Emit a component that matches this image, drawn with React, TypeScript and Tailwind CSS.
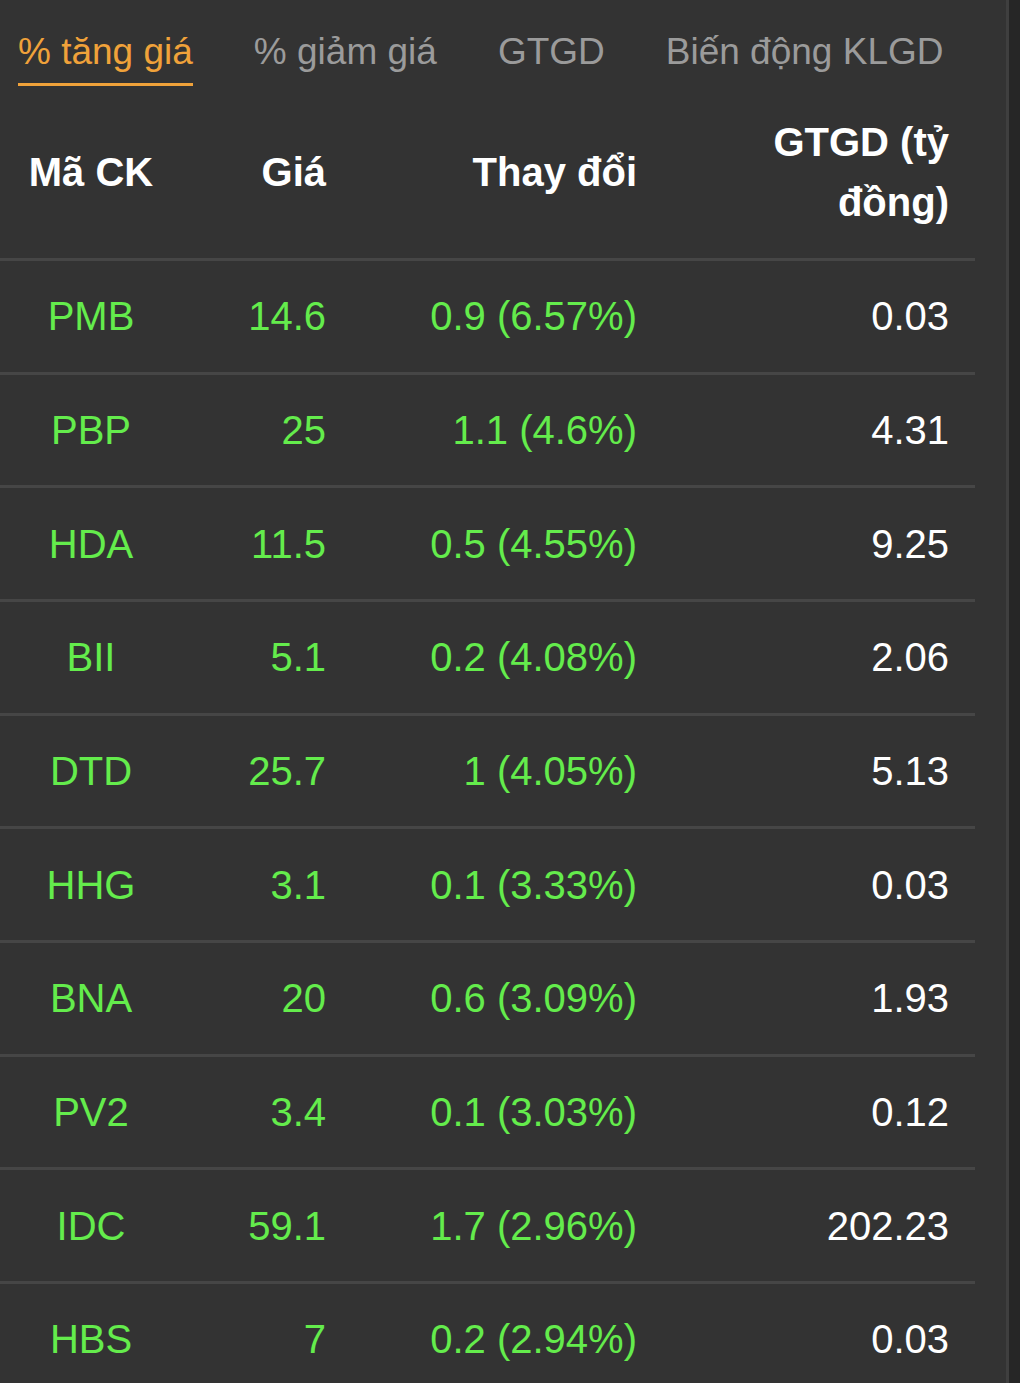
import React from "react";

const tabs = ["% tăng giá", "% giảm giá", "GTGD", "Biến động KLGD"];

const rows = [
  { code: "PMB", price: "14.6", change: "0.9 (6.57%)", value: "0.03" },
  { code: "PBP", price: "25", change: "1.1 (4.6%)", value: "4.31" },
  { code: "HDA", price: "11.5", change: "0.5 (4.55%)", value: "9.25" },
  { code: "BII", price: "5.1", change: "0.2 (4.08%)", value: "2.06" },
  { code: "DTD", price: "25.7", change: "1 (4.05%)", value: "5.13" },
  { code: "HHG", price: "3.1", change: "0.1 (3.33%)", value: "0.03" },
  { code: "BNA", price: "20", change: "0.6 (3.09%)", value: "1.93" },
  { code: "PV2", price: "3.4", change: "0.1 (3.03%)", value: "0.12" },
  { code: "IDC", price: "59.1", change: "1.7 (2.96%)", value: "202.23" },
  { code: "HBS", price: "7", change: "0.2 (2.94%)", value: "0.03" },
];

export default function App() {
  return (
    <div className="flex h-[1383px] overflow-hidden bg-[#262626] font-['Liberation_Sans',Arial,sans-serif]">
      <div className="w-[1009px] shrink-0 bg-[#333333] border-r-[3px] border-[#3f3f3f]">
        {/* tabs */}
        <div className="flex gap-[61px] pl-[18px] pt-[31px] h-[86px]">
          {tabs.map((t, i) => (
            <div key={t} className="flex flex-col">
              <span className={i === 0 ? "text-[37px] leading-[42px] text-[#f0a23a]" : "text-[37px] leading-[42px] text-[#9b9b9b]"}>
                {t}
              </span>
              {i === 0 && <div className="mt-[10px] h-[3px] bg-[#f0a23a]" />}
            </div>
          ))}
        </div>

        <div className="w-[975px]">
          {/* header */}
          <div className="grid grid-cols-[182px_144px_311px_312px] pr-[26px] h-[175px] items-center border-b-[3px] border-[#464646] text-white font-bold text-[40px] leading-[60px]">
            <div className="text-center">Mã CK</div>
            <div className="text-right">Giá</div>
            <div className="text-right">Thay đổi</div>
            <div className="text-right">
              GTGD (tỷ
              <br />
              đồng)
            </div>
          </div>

          {rows.map((r) => (
            <div
              key={r.code}
              className="grid grid-cols-[182px_144px_311px_312px] pr-[26px] h-[113.67px] items-center border-b-[3px] border-[#464646] text-[40px] leading-[46px]"
            >
              <div className="text-center text-[#64ec4c]">{r.code}</div>
              <div className="text-right text-[#64ec4c]">{r.price}</div>
              <div className="text-right text-[#64ec4c]">{r.change}</div>
              <div className="text-right text-white">{r.value}</div>
            </div>
          ))}
        </div>
      </div>
    </div>
  );
}
